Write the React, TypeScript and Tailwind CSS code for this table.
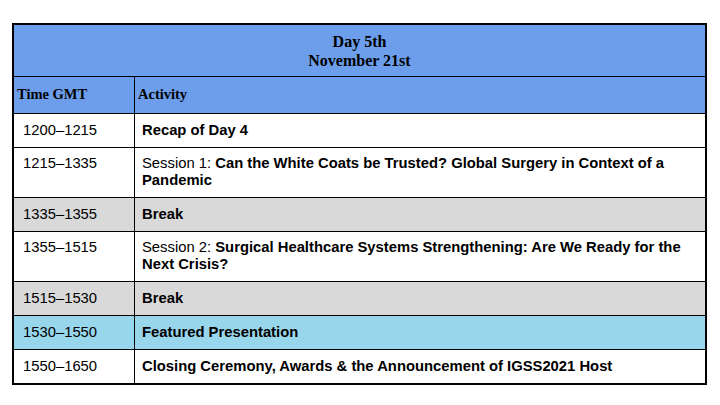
import type { ReactNode } from "react";

type Row = {
  time: string;
  activity: ReactNode;
  tone?: "break" | "featured";
  tall?: boolean;
};

const ROWS: Row[] = [
  { time: "1200–1215", activity: <b>Recap of Day 4</b> },
  {
    time: "1215–1335",
    tall: true,
    activity: (
      <>
        Session 1: <b>Can the White Coats be Trusted? Global Surgery in Context of a</b>
        <br />
        <b>Pandemic</b>
      </>
    ),
  },
  { time: "1335–1355", activity: <b>Break</b>, tone: "break" },
  {
    time: "1355–1515",
    tall: true,
    activity: (
      <>
        Session 2: <b>Surgical Healthcare Systems Strengthening: Are We Ready for the</b>
        <br />
        <b>Next Crisis?</b>
      </>
    ),
  },
  { time: "1515–1530", activity: <b>Break</b>, tone: "break" },
  { time: "1530–1550", activity: <b>Featured Presentation</b>, tone: "featured" },
  {
    time: "1550–1650",
    activity: <b>Closing Ceremony, Awards &amp; the Announcement of IGSS2021 Host</b>,
  },
];

function ScheduleRow({ row }: { row: Row }) {
  const bg =
    row.tone === "break" ? "bg-[#d9d9d9]" : row.tone === "featured" ? "bg-[#98d6eb]" : "bg-white";
  const align = row.tall ? "items-start pt-[7px]" : "items-center";
  return (
    <div
      className={`grid grid-cols-[121px_1fr] border-t border-black leading-[17px] ${bg} ${
        row.tall ? "h-[50px]" : "h-[34px]"
      }`}
    >
      <div className={`flex border-r border-black pl-[9px] ${align}`}>{row.time}</div>
      <div className={`flex whitespace-nowrap pl-[7px] ${align}`}>
        <span>{row.activity}</span>
      </div>
    </div>
  );
}

export default function App() {
  return (
    <div className="h-[405px] w-[720px] bg-white pt-[23px] pl-[12px]">
      <div
        className="w-[695px] border-2 border-black text-[14.8px] text-black"
        style={{ fontFamily: '"Liberation Sans", Arial, sans-serif' }}
      >
        {/* Day header */}
        <div
          className="flex h-[51px] flex-col items-center justify-center bg-[#6d9eeb] text-[16px] font-bold leading-[19px]"
          style={{ fontFamily: '"Liberation Serif", "Times New Roman", serif' }}
        >
          <span>Day 5th</span>
          <span>November 21st</span>
        </div>

        {/* Column headers */}
        <div
          className="grid h-[37px] grid-cols-[121px_1fr] border-t border-black bg-[#6d9eeb] text-[14.5px] font-bold"
          style={{ fontFamily: '"Liberation Serif", "Times New Roman", serif' }}
        >
          <div className="flex items-center border-r border-black pl-[3px]">Time GMT</div>
          <div className="flex items-center pl-[3px]">Activity</div>
        </div>

        {ROWS.map((row) => (
          <ScheduleRow key={row.time} row={row} />
        ))}
      </div>
    </div>
  );
}
